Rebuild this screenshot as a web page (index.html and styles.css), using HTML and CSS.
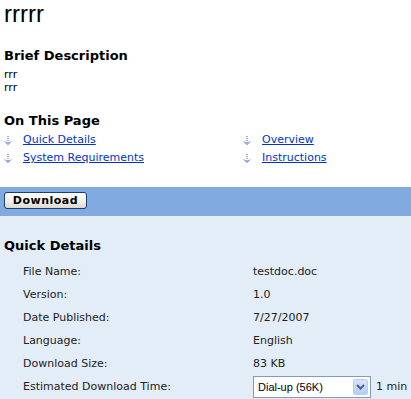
FILE: index.html
```html
<!DOCTYPE html>
<html lang="en">
<head>
  <meta charset="UTF-8">
  <title>rrrrr - Download details</title>
  <link rel="stylesheet" href="styles.css">
</head>
<body>

<div class="top">
  <h1 class="titulo">rrrrr</h1>

  <h2 class="secao">Brief Description</h2>
  <p class="descricao">rrr<br>rrr</p>

  <h2 class="secao secao-pagina">On This Page</h2>
  <div class="nesta-pagina">
    <div class="item-pagina">
      <svg class="seta" width="8" height="10" viewBox="0 0 8 10"><path d="M4 0v8" stroke="#3b5fc6" stroke-dasharray="1 1"/><path d="M1 5.5l3 3 3-3" fill="none" stroke="#3b5fc6"/></svg>
      <a href="#quick">Quick Details</a>
    </div>
    <div class="item-pagina">
      <svg class="seta" width="8" height="10" viewBox="0 0 8 10"><path d="M4 0v8" stroke="#3b5fc6" stroke-dasharray="1 1"/><path d="M1 5.5l3 3 3-3" fill="none" stroke="#3b5fc6"/></svg>
      <a href="#overview">Overview</a>
    </div>
    <div class="item-pagina">
      <svg class="seta" width="8" height="10" viewBox="0 0 8 10"><path d="M4 0v8" stroke="#3b5fc6" stroke-dasharray="1 1"/><path d="M1 5.5l3 3 3-3" fill="none" stroke="#3b5fc6"/></svg>
      <a href="#sysreq">System Requirements</a>
    </div>
    <div class="item-pagina">
      <svg class="seta" width="8" height="10" viewBox="0 0 8 10"><path d="M4 0v8" stroke="#3b5fc6" stroke-dasharray="1 1"/><path d="M1 5.5l3 3 3-3" fill="none" stroke="#3b5fc6"/></svg>
      <a href="#instructions">Instructions</a>
    </div>
  </div>
</div>

<div class="barra-download">
  <button class="botao-download">Download</button>
</div>

<div class="detalhes" id="quick">
  <h2 class="secao">Quick Details</h2>
  <div class="tabela">
    <div class="rotulo">File Name:</div><div class="valor">testdoc.doc</div>
    <div class="rotulo">Version:</div><div class="valor">1.0</div>
    <div class="rotulo">Date Published:</div><div class="valor">7/27/2007</div>
    <div class="rotulo">Language:</div><div class="valor">English</div>
    <div class="rotulo">Download Size:</div><div class="valor">83 KB</div>
    <div class="rotulo">Estimated Download Time:</div>
    <div class="valor">
      <div class="combo">
        <span class="combo-texto">Dial-up (56K)</span>
        <span class="combo-botao"><svg width="9" height="6" viewBox="0 0 9 6"><path d="M1 1l3.5 3.5L8 1" fill="none" stroke="#4d6185" stroke-width="2"/></svg></span>
      </div>
      <span class="tempo">1 min</span>
    </div>
  </div>
</div>

</body>
</html>
```

FILE: styles.css
```css
body {
  margin: 0;
  font-family: "DejaVu Sans", Verdana, sans-serif;
  font-size: 11px;
  color: #000;
  background-color: #e3edf7;
}
.top {
  background-color: #fff;
  padding: 0 4px 20px 4px;
}
.titulo {
  margin: 0;
  font-family: "Liberation Sans", Arial, sans-serif;
  font-size: 24px;
  font-weight: normal;
  line-height: 28px;
}
.secao {
  margin: 20px 0 4px 0;
  font-size: 13px;
  font-weight: bold;
  line-height: 16px;
}
.secao-pagina {
  margin-top: 19px;
  margin-bottom: 2px;
}
.descricao {
  margin: 0;
  line-height: 13px;
}
.nesta-pagina {
  display: grid;
  grid-template-columns: 239px 1fr;
}
.item-pagina {
  display: flex;
  align-items: center;
  line-height: 18px;
}
.seta {
  width: 8px;
  margin-right: 11px;
  margin-top: 2px;
}
.item-pagina a {
  color: #0033cc;
}
.barra-download {
  background-color: #80aae0;
  padding: 5px 4px 7px 4px;
}
.botao-download {
  display: block;
  width: 83px;
  height: 17px;
  padding: 0;
  font-family: "DejaVu Sans", Verdana, sans-serif;
  font-size: 11px;
  font-weight: bold;
  letter-spacing: 0.5px;
  color: #000;
  background: linear-gradient(#ffffff, #f0efe8 60%, #dcd9cc);
  border: 1px solid #1c3f74;
  border-radius: 3px;
}
.detalhes {
  padding: 1px 4px 0 4px;
}
.detalhes .secao {
  margin-top: 21px;
  margin-bottom: 6px;
}
.tabela {
  display: grid;
  grid-template-columns: 230px 1fr;
  grid-auto-rows: 23px;
  padding-left: 19px;
  color: #222;
}
.rotulo, .valor {
  display: flex;
  align-items: center;
  white-space: nowrap;
}
.combo {
  display: flex;
  flex-shrink: 0;
  align-items: center;
  width: 116px;
  height: 20px;
  background-color: #fff;
  border: 1px solid #7f9db9;
  font-family: "Liberation Sans", Arial, sans-serif;
  font-size: 11px;
  color: #000;
}
.combo-texto {
  flex: 1;
  padding-left: 4px;
}
.combo-botao {
  display: flex;
  align-items: center;
  justify-content: center;
  width: 15px;
  height: 16px;
  margin-right: 2px;
  background: linear-gradient(#d6e4fb, #b6cdf6);
  border: 1px solid #b9cdf1;
  border-radius: 2px;
  box-sizing: border-box;
}
.tempo {
  margin-left: 5px;
}
```
